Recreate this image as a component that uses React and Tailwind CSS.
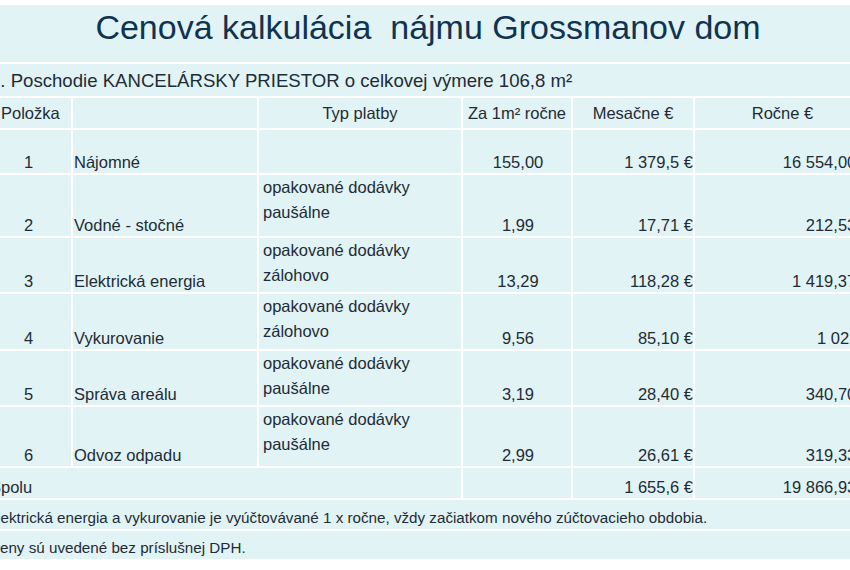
import React from "react";

const rows = [
  { n: "1", name: "Nájomné", typ: [], m2: "155,00", mes: "1 379,5 €", roc: "16 554,00 €", h: "h-[43px]" },
  { n: "2", name: "Vodné - stočné", typ: ["opakované dodávky", "paušálne"], m2: "1,99", mes: "17,71 €", roc: "212,53 €", h: "h-[61px]" },
  { n: "3", name: "Elektrická energia", typ: ["opakované dodávky", "zálohovo"], m2: "13,29", mes: "118,28 €", roc: "1 419,37 €", h: "h-[54px]" },
  { n: "4", name: "Vykurovanie", typ: ["opakované dodávky", "zálohovo"], m2: "9,56", mes: "85,10 €", roc: "1 021,01 €", h: "h-[55px]", shift: true },
  { n: "5", name: "Správa areálu", typ: ["opakované dodávky", "paušálne"], m2: "3,19", mes: "28,40 €", roc: "340,70 €", h: "h-[54px]" },
  { n: "6", name: "Odvoz odpadu", typ: ["opakované dodávky", "paušálne"], m2: "2,99", mes: "26,61 €", roc: "319,33 €", h: "h-[59px]" },
];

const cell = "bg-[#e2f3f5]";
const bottom = "flex items-end pb-[1px] leading-[20px]";

export default function App() {
  return (
    <div className="w-[850px] h-[570px] overflow-hidden bg-white pt-[5px] text-[#1d2c37] text-[16.5px] font-['Liberation_Sans',Arial,sans-serif]">
      <div className="-ml-[14px] w-[884px] grid grid-cols-[85px_184px_202px_108px_120px_175px] gap-[2px] bg-white">
        {/* title */}
        <div className={`${cell} col-span-6 h-[57px] flex items-center justify-center pb-[14px]`}>
          <h1 className="text-[34px] leading-none text-[#0e3452] whitespace-pre">
            {"Cenová kalkulácia  nájmu Grossmanov dom"}
          </h1>
        </div>

        {/* subtitle */}
        <div className={`${cell} col-span-6 h-[32px] flex items-center pl-[4px] pt-[1px] text-[18.6px]`}>
          1. Poschodie KANCELÁRSKY PRIESTOR o celkovej výmere 106,8 m²
        </div>

        {/* header */}
        <div className={`${cell} h-[30px] flex items-center pl-[15px]`}>Položka</div>
        <div className={cell}></div>
        <div className={`${cell} flex items-center justify-center`}>Typ platby</div>
        <div className={`${cell} flex items-center justify-center`}>Za 1m² ročne</div>
        <div className={`${cell} flex items-center justify-center`}>Mesačne €</div>
        <div className={`${cell} flex items-center justify-center`}>Ročne €</div>

        {rows.map((r) => (
          <React.Fragment key={r.n}>
            <div className={`${cell} ${r.h} ${bottom} justify-center`}>{r.n}</div>
            <div className={`${cell} ${bottom} pl-[1px]`}>{r.name}</div>
            <div className={`${cell} pl-[4px] leading-[25px]`}>
              {r.typ.map((t) => (
                <div key={t}>{t}</div>
              ))}
            </div>
            <div className={`${cell} ${bottom} justify-center pl-[2px]`}>{r.m2}</div>
            <div className={`${cell} ${bottom} justify-end`}>{r.mes}</div>
            <div className={`${cell} ${bottom} justify-end`}>
              <span className={r.shift ? "-mr-[25px] whitespace-nowrap" : "whitespace-nowrap"}>{r.roc}</span>
            </div>
          </React.Fragment>
        ))}

        {/* total */}
        <div className={`${cell} col-span-3 h-[30px] flex items-end pb-[1px] pl-[4px] leading-[20px]`}>Spolu</div>
        <div className={cell}></div>
        <div className={`${cell} flex items-end pb-[1px] justify-end leading-[20px]`}>1 655,6 €</div>
        <div className={`${cell} flex items-end pb-[1px] justify-end leading-[20px]`}>19 866,93 €</div>

        {/* notes */}
        <div className={`${cell} col-span-6 h-[29px] flex items-end pb-[1px] pl-[1px] leading-[20px] text-[15.2px]`}>
          Elektrická energia a vykurovanie je vyúčtovávané 1 x ročne, vždy začiatkom nového zúčtovacieho obdobia.
        </div>
        <div className={`${cell} col-span-6 h-[28px] flex items-end pb-[1px] pl-[3px] leading-[20px] text-[15.2px]`}>
          Ceny sú uvedené bez príslušnej DPH.
        </div>
      </div>
    </div>
  );
}
